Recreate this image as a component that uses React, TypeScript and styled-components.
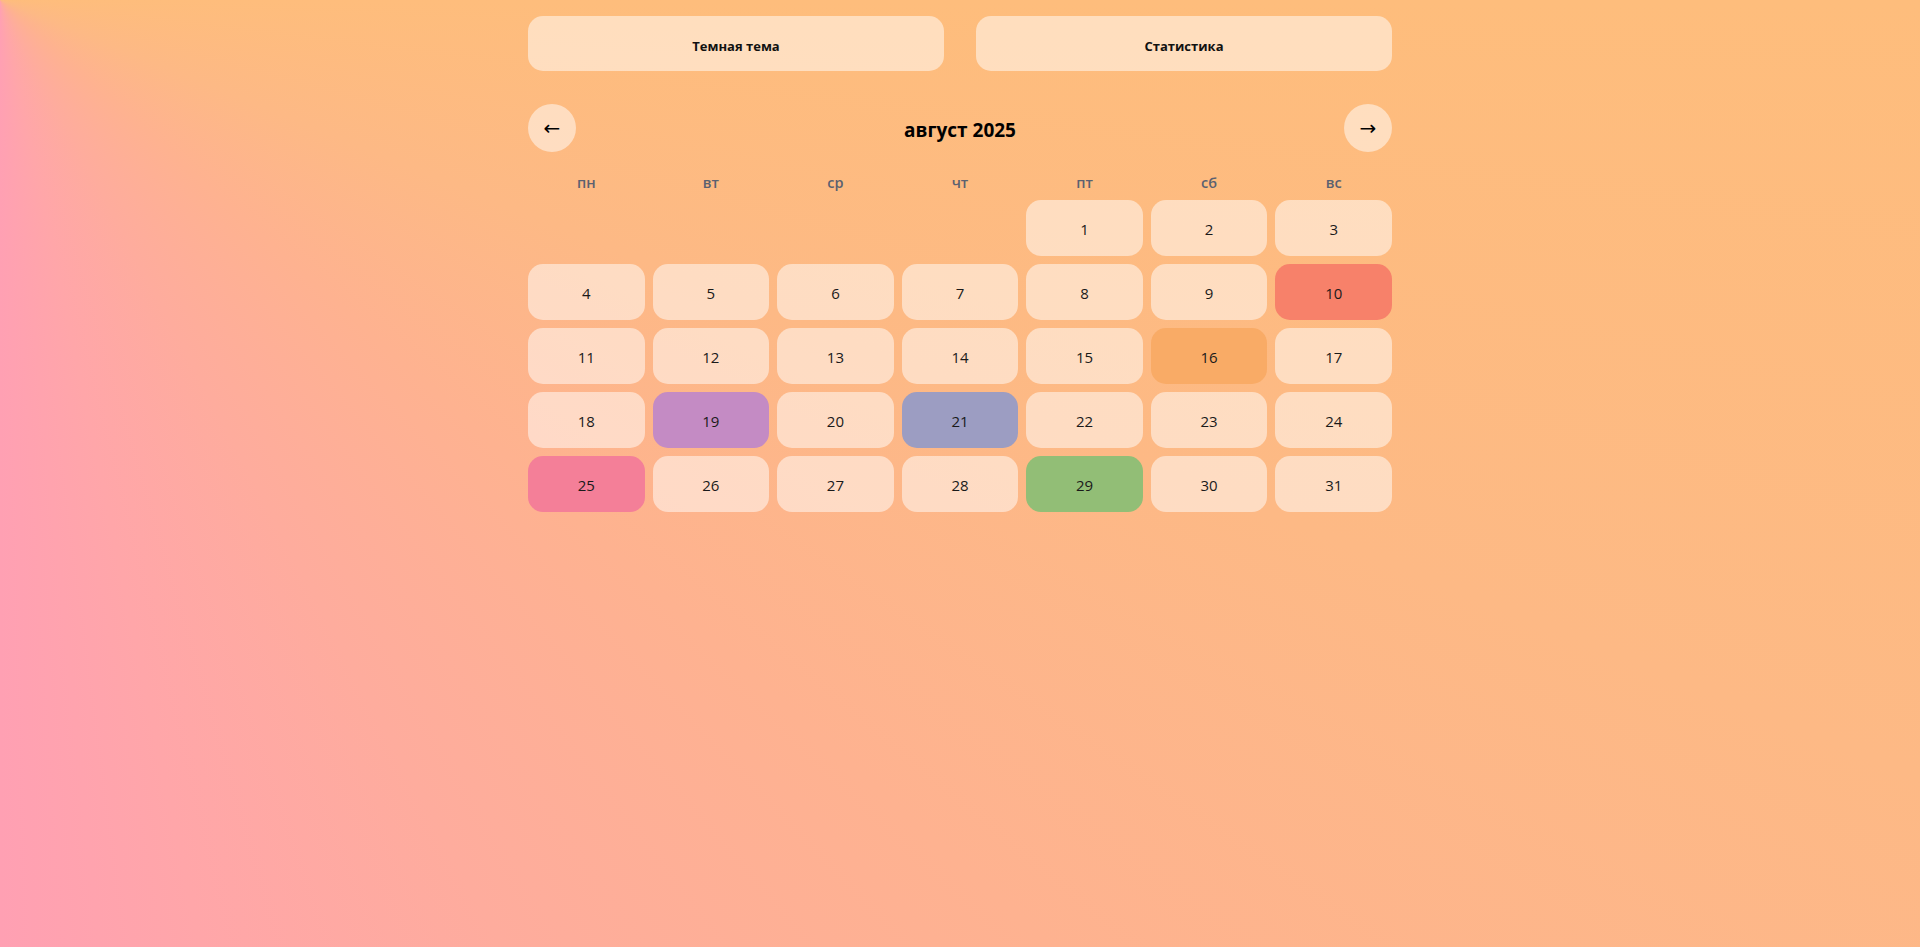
import React from "react";
import styled, { createGlobalStyle } from "styled-components";

const GlobalStyle = createGlobalStyle`
  html, body {
    margin: 0;
    padding: 0;
    min-height: 100%;
  }
  body {
    min-height: 947px;
    font-family: "Open Sans", "Noto Sans", "Liberation Sans", sans-serif;
    color: #111;
    background: conic-gradient(
      from 90deg at 0% 0%,
      #febd7c 0deg,
      #fdb985 22deg,
      #feb290 42deg,
      #feac9d 62deg,
      #ffa6a9 78deg,
      #ffa0b3 90deg
    );
    background-attachment: fixed;
  }
`;

const Page = styled.div`
  width: 864px;
  margin: 0 auto;
  padding-top: 16px;
  display: flex;
  flex-direction: column;
`;

const TopBar = styled.div`
  display: grid;
  grid-template-columns: 1fr 1fr;
  gap: 32px;
`;

const TopButton = styled.button`
  height: 55px;
  border: none;
  border-radius: 15px;
  background: rgba(255, 255, 255, 0.5);
  font-family: inherit;
  font-size: 13px;
  font-weight: 700;
  color: #111;
  padding: 4px 0 0;
  cursor: pointer;
`;

const Nav = styled.div`
  margin-top: 33px;
  display: flex;
  align-items: center;
  justify-content: space-between;
`;

const Circle = styled.button`
  width: 48px;
  height: 48px;
  border-radius: 50%;
  border: none;
  background: rgba(255, 255, 255, 0.5);
  display: flex;
  align-items: center;
  justify-content: center;
  font-family: "DejaVu Sans", sans-serif;
  font-size: 20px;
  color: #000;
  padding: 0;
  cursor: pointer;
`;

const Title = styled.h2`
  margin: 0;
  padding-top: 4px;
  font-size: 19px;
  font-weight: 700;
  color: #000;
`;

const Weekdays = styled.div`
  margin-top: 18px;
  display: grid;
  grid-template-columns: repeat(7, 1fr);
  gap: 8px;
  height: 24px;
  align-items: center;
`;

const Weekday = styled.div`
  text-align: center;
  font-size: 14.5px;
  font-weight: 600;
  color: #5b6170;
`;

const Grid = styled.div`
  margin-top: 6px;
  display: grid;
  grid-template-columns: repeat(7, 1fr);
  grid-auto-rows: 56px;
  gap: 8px;
`;

const Day = styled.div<{ $bg?: string; $start?: number }>`
  border-radius: 15px;
  background: ${(p) => p.$bg ?? "rgba(255, 255, 255, 0.5)"};
  display: flex;
  align-items: center;
  justify-content: center;
  padding-top: 2px;
  box-sizing: border-box;
  font-size: 15px;
  color: #1a1a1a;
  ${(p) => (p.$start ? `grid-column-start: ${p.$start};` : "")}
`;

const marks: Record<number, string> = {
  10: "#f7816a",
  16: "#f9ab66",
  19: "#c48bc4",
  21: "#9c9dc2",
  25: "#f47f98",
  29: "#92be76",
};

const weekdays = ["пн", "вт", "ср", "чт", "пт", "сб", "вс"];

export default function App() {
  const days = Array.from({ length: 31 }, (_, i) => i + 1);
  return (
    <>
      <GlobalStyle />
      <Page>
        <TopBar>
          <TopButton>Темная тема</TopButton>
          <TopButton>Статистика</TopButton>
        </TopBar>
        <Nav>
          <Circle>←</Circle>
          <Title>август 2025</Title>
          <Circle>→</Circle>
        </Nav>
        <Weekdays>
          {weekdays.map((w) => (
            <Weekday key={w}>{w}</Weekday>
          ))}
        </Weekdays>
        <Grid>
          {days.map((d) => (
            <Day key={d} $bg={marks[d]} $start={d === 1 ? 5 : undefined}>
              {d}
            </Day>
          ))}
        </Grid>
      </Page>
    </>
  );
}
